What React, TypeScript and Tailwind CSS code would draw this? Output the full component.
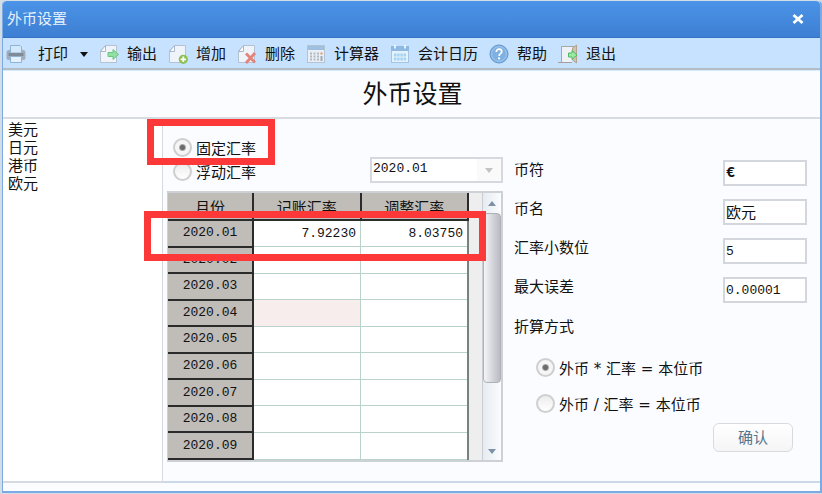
import React, { useState } from 'react'

const currencies = ['美元', '日元', '港币', '欧元']

const months = ['2020.01', '2020.02', '2020.03', '2020.04', '2020.05', '2020.06', '2020.07', '2020.08', '2020.09']

const rates: Record<string, { booking: string; adjusted: string }> = {
  '2020.01': { booking: '7.92230', adjusted: '8.03750' },
}

const PrinterIcon = () => (
  <svg viewBox="0 0 20 20" className="w-5 h-5 shrink-0">
    <rect x="0.5" y="6" width="19" height="10" rx="2.5" fill="#a3adb9" />
    <path d="M4.5 9V1.5h9.5L15.5 3v6z" fill="#d3e9fb" stroke="#8fb4d3" />
    <rect x="2.5" y="9" width="15" height="3" fill="#808b99" />
    <path d="M4.5 12.5h11v6h-11z" fill="#e3f1fc" stroke="#8fb4d3" />
  </svg>
)

const PagePath = () => (
  <>
    <path d="M6.5 1.5H17.5V18.5H1.5V7z" fill="#eff4fa" stroke="#b4c2d2" />
    <path d="M1.5 7.5h5v-6z" fill="#fff" stroke="#a8b6c7" strokeLinejoin="round" />
  </>
)

const ExportIcon = () => (
  <svg viewBox="0 0 20 20" className="w-5 h-5 shrink-0">
    <PagePath />
    <path d="M9 8.5h5V5.5l5.5 5-5.5 5v-3H9z" fill="#8fe0a2" stroke="#6cc482" />
  </svg>
)

const AddIcon = () => (
  <svg viewBox="0 0 20 20" className="w-5 h-5 shrink-0">
    <PagePath />
    <circle cx="15.3" cy="15.3" r="4.6" fill="#8cc152" />
    <path d="M15.3 12.6v5.4M12.6 15.3h5.4" stroke="#fff" strokeWidth="1.8" />
  </svg>
)

const DeleteIcon = () => (
  <svg viewBox="0 0 20 20" className="w-5 h-5 shrink-0">
    <PagePath />
    <path d="M9 9.5l9 9M18 9l-9 10" stroke="#e5837a" strokeWidth="2.8" />
  </svg>
)

const CalculatorIcon = () => (
  <svg viewBox="0 0 20 20" className="w-5 h-5 shrink-0">
    <rect x="1.5" y="1.5" width="17" height="17" fill="#e9eff5" stroke="#b4c3d2" />
    <rect x="2" y="2" width="16" height="4" fill="#9dbfe2" />
    <path d="M4 9.5h9M4 12.5h9M4 15.5h9" stroke="#b0b8c2" strokeWidth="2" strokeDasharray="2 1.5" />
    <path d="M14.5 9.5h2" stroke="#e2926e" strokeWidth="2" />
    <path d="M15.5 12v5" stroke="#9fa9b5" strokeWidth="2" />
  </svg>
)

const CalendarIcon = () => (
  <svg viewBox="0 0 20 20" className="w-5 h-5 shrink-0">
    <rect x="1.5" y="2.5" width="17" height="16" fill="#e4f2fd" stroke="#a3c4e2" />
    <rect x="1" y="2" width="18" height="5" fill="#8db9e2" />
    <path d="M5 1v3.5M15 1v3.5" stroke="#fff" strokeWidth="1.5" />
    <path d="M4 11h12M4 15h12" stroke="#a5d2f2" strokeWidth="3" strokeDasharray="2.4 .8" />
  </svg>
)

const HelpIcon = () => (
  <svg viewBox="0 0 20 20" className="w-5 h-5 shrink-0">
    <circle cx="10" cy="10" r="9" fill="#7fb0e2" stroke="#6397cf" />
    <circle cx="10" cy="10" r="7.4" fill="none" stroke="#a2c8ed" />
    <path d="M7.3 8c0-1.8 1.2-2.8 2.8-2.8s2.7 1 2.7 2.5c0 2-2.7 2-2.7 4.2" fill="none" stroke="#fff" strokeWidth="1.7" />
    <circle cx="10.1" cy="14.4" r="1.1" fill="#fff" />
  </svg>
)

const ExitIcon = () => (
  <svg viewBox="0 0 20 20" className="w-5 h-5 shrink-0">
    <path d="M0 18.5h14" stroke="#a99e97" />
    <path d="M3.5 18V2.5H17" fill="none" stroke="#aaa6a4" />
    <path d="M4 3h10v15H4z" fill="#eef2f6" />
    <path d="M14.5 4l4-3v18l-4-3z" fill="#cfc2ae" stroke="#b2a48f" />
    <path d="M10.5 9h3.5V6.5l5 4.5-5 4.5V13h-3.5z" fill="#9be8a4" stroke="#50b765" />
  </svg>
)

const tools = [
  { label: '输出', Icon: ExportIcon },
  { label: '增加', Icon: AddIcon },
  { label: '删除', Icon: DeleteIcon },
  { label: '计算器', Icon: CalculatorIcon },
  { label: '会计日历', Icon: CalendarIcon },
  { label: '帮助', Icon: HelpIcon },
  { label: '退出', Icon: ExitIcon },
]

interface RadioProps {
  name: string
  label: string
  checked: boolean
  onChange: () => void
}

const Radio: React.FC<RadioProps> = ({ name, label, checked, onChange }) => (
  <label className="flex items-center gap-1 h-6 whitespace-pre">
    <input
      type="radio"
      name={name}
      checked={checked}
      onChange={onChange}
      className="appearance-none w-[19px] h-[19px] shrink-0 rounded-full border-2 border-[#cfcfcf] bg-[linear-gradient(#ececec,#ffffff)] checked:bg-[radial-gradient(circle,#6b6b6b_0_2px,#a9a9a9_3px,#f6f6f6_4px)]"
    />
    <span className="pt-1">{label}</span>
  </label>
)

interface FieldProps {
  id: string
  label: string
  value: string
  className?: string
}

const Field: React.FC<FieldProps> = ({ id, label, value, className = 'text-[13px]' }) => (
  <div className="flex items-start justify-between">
    <label htmlFor={id} className="leading-5">
      {label}
    </label>
    <input
      id={id}
      defaultValue={value}
      className={`w-[84px] h-[26px] border-2 border-[#d3d6dd] bg-white px-px font-['Liberation_Mono','Noto_Sans_CJK_SC',monospace] ${className}`}
    />
  </div>
)

const App: React.FC = () => {
  const [rateType, setRateType] = useState('fixed')
  const [method, setMethod] = useState('multiply')

  return (
    <div className="min-h-screen flex flex-col bg-[#d3dde6] pt-px pl-0.5 pb-px text-[15px] leading-5 text-[#111] font-['DejaVu_Sans','Noto_Sans_CJK_SC',sans-serif]">
      <div className="flex-1 flex flex-col bg-[#fbfcff] border border-r-2 border-b-2 border-t-0 border-[#7eaae4] rounded-t">
        <header className="h-[37px] flex items-center justify-between pl-1 pr-4 rounded-t bg-linear-to-b from-[#4b94e8] to-[#3d7fd2] border-b border-[#3572c4]">
          <span className="text-[#e6f0fc]">外币设置</span>
          <button aria-label="关闭" className="w-3 h-3">
            <svg viewBox="0 0 12 12" className="w-3 h-3">
              <path d="M1.5 2l9 8M10.5 2l-9 8" stroke="#fff" strokeWidth="2.8" />
            </svg>
          </button>
        </header>

        <nav className="h-8 flex items-center gap-[11px] pt-0.5 pl-[3px] bg-[#c6e2fe] border-b-2 border-[#b4bcc5]">
          <button className="flex items-center gap-3">
            <PrinterIcon />
            <span>打印</span>
            <svg viewBox="0 0 8 5" className="w-2 h-[5px]">
              <path d="M0 0h8L4 5z" fill="#111" />
            </svg>
          </button>
          {tools.map(({ label, Icon }) => (
            <button key={label} className="flex items-center gap-2">
              <Icon />
              <span>{label}</span>
            </button>
          ))}
        </nav>

        <div className="h-[49px] flex items-center justify-center pt-0.5 pl-0.5 border-t border-b-2 border-t-[#d3ebfa] border-b-[#d7dce3]">
          <h1 className="text-[25px] leading-8">外币设置</h1>
        </div>

        <main className="flex-1 flex items-stretch pb-2">
          <ul className="w-[160px] shrink-0 bg-white border-r border-b-2 border-[#d5d9e1] pt-0.5 pl-[5px]">
            {currencies.map((name) => (
              <li key={name} className="leading-[18px]">
                {name}
              </li>
            ))}
          </ul>

          <section className="flex-1 flex items-start border-b-2 border-[#cbd8e8] pl-1">
            <div className="w-[336px] shrink-0">
              <div className="flex justify-between pt-4 pl-1.5">
                <div className="relative">
                  <Radio name="rateType" label="固定汇率" checked={rateType === 'fixed'} onChange={() => setRateType('fixed')} />
                  <Radio name="rateType" label="浮动汇率" checked={rateType === 'float'} onChange={() => setRateType('float')} />
                  <div className="absolute -top-4 -left-[26px] w-[128px] h-[46px] border-[7px] border-[#fd3838] pointer-events-none" />
                </div>
                <div className="relative mt-[22px] h-[26px]">
                  <select
                    aria-label="月份"
                    defaultValue="2020.01"
                    className="appearance-none w-[133px] h-[26px] pl-px pb-0.5 border-2 border-[#d5d8de] bg-white font-['Liberation_Mono',monospace] text-[13px]"
                  >
                    {months.map((m) => (
                      <option key={m}>{m}</option>
                    ))}
                  </select>
                  <div className="absolute inset-y-0.5 right-0.5 w-6 flex items-center justify-center bg-[#fafafa] pointer-events-none">
                    <svg viewBox="0 0 8 5" className="w-2 h-[5px]">
                      <path d="M0 0h8L4 5z" fill="#c3c3c3" />
                    </svg>
                  </div>
                </div>
              </div>

              <div className="relative flex mt-2 border-2 border-l border-[#cdd1d6]">
                <table className="w-[301px] h-[267px] table-fixed border-collapse">
                  <thead>
                    <tr className="h-[27px] bg-[#c0bcb7]">
                      <th className="w-[85px] px-0 pt-1 pb-0 font-normal border-r-2 border-b-2 border-[#2b2b2b]">月份</th>
                      <th className="px-0 pt-1 pb-0 font-normal border-r-2 border-b-2 border-[#2b2b2b]">记账汇率</th>
                      <th className="px-0 pt-1 pb-0 font-normal border-r-2 border-b-2 border-[#2b2b2b]">调整汇率</th>
                    </tr>
                  </thead>
                  <tbody className="font-['Liberation_Mono',monospace] text-[13px]">
                    {months.map((m) => (
                      <tr key={m}>
                        <th className="p-0 font-normal bg-[#c0bcb7] border-r-2 border-b-2 border-[#2b2b2b]">{m}</th>
                        <td
                          className={`py-0 pl-0 pr-1 text-right border-r border-b border-[#b9d3ca] ${
                            m === '2020.04' ? 'bg-[#f6edec]' : 'bg-white'
                          }`}
                        >
                          {rates[m]?.booking}
                        </td>
                        <td className="py-0 pl-0 pr-1 text-right bg-white border-b border-r-2 border-b-[#b9d3ca] border-r-[#77827f]">
                          {rates[m]?.adjusted}
                        </td>
                      </tr>
                    ))}
                  </tbody>
                </table>
                <div className="flex-1 bg-[#eeeeee]" />
                <div className="w-[19px] flex flex-col items-center bg-linear-to-r from-[#e6ecf1] to-[#fafcfd] border-l border-[#c9cdd2]">
                  <div className="h-5 flex items-center">
                    <svg viewBox="0 0 8 5" className="w-2 h-[5px]">
                      <path d="M0 5h8L4 0z" fill="#7e90a5" />
                    </svg>
                  </div>
                  <div className="w-full h-[170px] rounded-sm border border-[#aeb1b8] bg-linear-to-r from-[#f5f5f8] to-[#b9bac3]" />
                  <div className="flex-1 flex items-end pb-1.5">
                    <svg viewBox="0 0 8 5" className="w-2 h-[5px]">
                      <path d="M0 0h8L4 5z" fill="#7e90a5" />
                    </svg>
                  </div>
                </div>
                <div className="absolute top-[18px] -left-6 w-[342px] h-[50px] border-[7px] border-[#fd3838] pointer-events-none" />
              </div>
            </div>

            <form className="flex-1 flex flex-col pt-[41px] pl-[11px] pr-[13px]" onSubmit={(e) => e.preventDefault()}>
              <div className="flex flex-col gap-[13px]">
                <Field id="symbol" label="币符" value="€" className="text-[15px] font-bold" />
                <Field id="name" label="币名" value="欧元" className="text-[15px]" />
                <Field id="digits" label="汇率小数位" value="5" />
                <Field id="tolerance" label="最大误差" value="0.00001" />
              </div>
              <fieldset className="mt-3.5">
                <legend>折算方式</legend>
                <div className="flex flex-col gap-3 pt-[18px] pl-[22px]">
                  <Radio name="method" label="外币 * 汇率 = 本位币" checked={method === 'multiply'} onChange={() => setMethod('multiply')} />
                  <Radio name="method" label="外币 / 汇率 = 本位币" checked={method === 'divide'} onChange={() => setMethod('divide')} />
                </div>
              </fieldset>
              <button
                type="submit"
                className="self-end mt-2 mr-3.5 w-20 h-[29px] rounded-md border border-[#d8dadd] bg-linear-to-b from-white to-[#f5f5f6] text-[#55748c]"
              >
                确认
              </button>
            </form>
          </section>
        </main>
      </div>
    </div>
  )
}

export default App
